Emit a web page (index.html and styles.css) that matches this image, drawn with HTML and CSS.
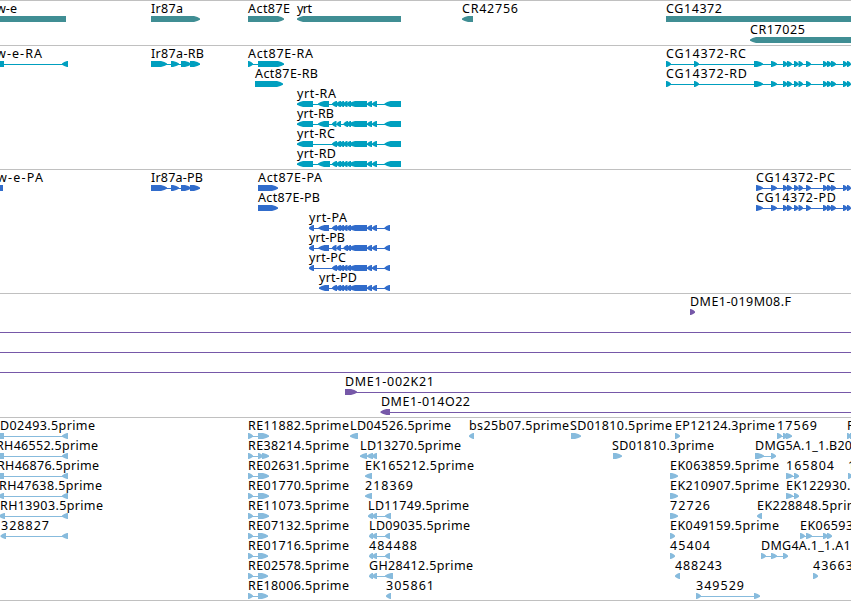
FILE: index.html
```
<!DOCTYPE html>
<html lang="en">
<head>
<meta charset="utf-8">
<title>Genome tracks</title>
<link rel="stylesheet" href="styles.css">
</head>
<body>
<main class="tracks">
<svg class="track track-gene"></svg>
<svg class="track track-transcript"></svg>
<svg class="track track-protein"></svg>
<svg class="track track-bac"></svg>
<svg class="track track-est"></svg>
</main>
<script src="tracks.js"></script>
</body>
</html>
```
FILE: styles.css
```
body {
  margin: 0;
  background: #fff;
}
.tracks {
  display: flex;
  flex-direction: column;
  width: 851px;
  height: 601px;
  box-sizing: border-box;
  border-bottom: 1px solid #c0c0c0;
  overflow: hidden;
}
.track {
  display: block;
  flex: none;
  width: 851px;
  box-sizing: border-box;
  border-top: 1px solid #c0c0c0;
  overflow: hidden;
}
.track-gene { height: 45px; color: #408e94; }
.track-transcript { height: 124px; color: #009fbf; }
.track-protein { height: 124px; color: #316ccb; }
.track-bac { height: 124px; color: #7658a8; }
.track-est { height: 183px; color: #87bbdd; }
.label {
  font: 12.5px "Noto Sans", "DejaVu Sans", sans-serif;
  fill: #000;
}
.span, .exon { fill: currentColor; }
.span { shape-rendering: crispEdges; }
```
FILE: tracks.js
```
// Feature: [row, direction, label, label start, label end, exon ranges]
const yrtMid = [[332,337],[336,341],[339.5,344],[343,347.5],[346.5,351],[349,367],[367,372],[372,377]];
const yrtSkip = [[332,336.5],[336.5,341],[343.5,348],[347,351],[349,367],[367,372],[372,377]];
const cgTail = [[771,777],[783,787.5],[787,792],[794,798.5],[798.5,803],[806,811],[823,827.5],[827,831.5],[831,836],[843,847.5],[847,851]];
const re = [[248,253],[258,269]];

const tracks = {
  gene: { pitch: 21, features: [
    [0,0,'w-e',-4,17,[[-10,66]]],
    [0,1,'Ir87a',151,183,[[151,200]]],
    [0,1,'Act87E',248,290,[[248,284]]],
    [0,-1,'yrt',297,312,[[297,401]]],
    [0,-1,'CR42756',462,518,[[462,473]]],
    [0,0,'CG14372',666,722,[[666,860]]],
    [1,-1,'CR17025',750,805,[[750,860]]]
  ]},
  transcript: { pitch: 20, features: [
    [0,-1,'w-e-RA',-4,42,[[-10,4],[62,68]]],
    [0,1,'Ir87a-RB',151,204,[[151,167],[171,179],[181,191],[190,200]]],
    [0,1,'Act87E-RA',248,313,[[248,253],[258,284]]],
    [1,1,'Act87E-RB',255,318,[[255,283]]],
    [2,-1,'yrt-RA',297,336,[[297,313],[318,329],...yrtMid,[384.5,401]]],
    [3,-1,'yrt-RB',297,334,[[297,313],[318,329],...yrtSkip,[384.5,401]]],
    [4,-1,'yrt-RC',297,335,[[297,313],...yrtMid,[384.5,401]]],
    [5,-1,'yrt-RD',297,336,[[297,313],[318,330],...yrtMid,[384.5,401]]],
    [0,1,'CG14372-RC',666,746,[[666,671],[694,699],[754,763],...cgTail]],
    [1,1,'CG14372-RD',666,747,[[666,671],[694,699],[754,763],...cgTail]]
  ]},
  protein: { pitch: 20, features: [
    [0,0,'w-e-PA',-3,43,[[-10,3]]],
    [0,1,'Ir87a-PB',151,203,[[151,167],[171,179],[181,191],[190,200]]],
    [0,1,'Act87E-PA',258,322,[[258,278]]],
    [1,1,'Act87E-PB',258,320,[[258,278]]],
    [2,-1,'yrt-PA',309,347,[[309,314],[318.5,329],...yrtMid,[384.5,390]]],
    [3,-1,'yrt-PB',309,345,[[309,314],[318.5,329],...yrtSkip,[384.5,390]]],
    [4,-1,'yrt-PC',309,346,[[309,314],...yrtMid,[384.5,390]]],
    [5,-1,'yrt-PD',319,357,[[319,329],...yrtMid,[384.5,390]]],
    [0,1,'CG14372-PC',756,835,[[756,763],...cgTail]],
    [1,1,'CG14372-PD',756,836,[[756,763],...cgTail]]
  ]},
  bac: { pitch: 20, features: [
    [0,1,'DME1-019M08.F',690,791,[[690,695]]],
    [1,1,'',0,0,[[-20,-10],[870,880]]],
    [2,1,'',0,0,[[-20,-10],[870,880]]],
    [3,1,'',0,0,[[-20,-10],[870,880]]],
    [4,1,'DME1-002K21',345,434,[[345,357],[870,880]]],
    [5,-1,'DME1-014O22',381,470,[[380.5,390],[870,880]]]
  ]},
  est: { pitch: 20, features: [
    [0,-1,'D02493.5prime',0,95,[[-10,4],[62,68]]],
    [1,-1,'RH46552.5prime',-4,98,[[-10,4],[62,68]]],
    [2,-1,'RH46876.5prime',-3,99,[[-10,4],[62,68]]],
    [3,-1,'RH47638.5prime',-1,102,[[-2,4],[62,68]]],
    [4,-1,'RH13903.5prime',0,103,[[-1,5],[62,68]]],
    [5,-1,'328827',1,49,[[0.5,6],[62,68]]],
    [0,1,'RE11882.5prime',248,349,re],
    [1,1,'RE38214.5prime',248,349,[[248,253],[258,263],[262,269]]],
    [2,1,'RE02631.5prime',248,349,re],
    [3,1,'RE01770.5prime',248,349,re],
    [4,1,'RE11073.5prime',248,349,re],
    [5,1,'RE07132.5prime',248,349,[[248,253],[258,268]]],
    [6,1,'RE01716.5prime',248,349,[[248,253],[258,268]]],
    [7,1,'RE02578.5prime',248,349,[[248,253],[258,268]]],
    [8,1,'RE18006.5prime',248,349,[[248,253],[258,268]]],
    [0,-1,'LD04526.5prime',350,451,[[350,358]]],
    [1,-1,'LD13270.5prime',360,461,[[360,367],[367,373],[372,377]]],
    [2,-1,'EK165212.5prime',365,474,[[365,372]]],
    [3,-1,'218369',365,413,[[365,372]]],
    [4,-1,'LD11749.5prime',368,469,[[368,373],[372,377],[385,391]]],
    [5,-1,'LD09035.5prime',369,470,[[369,373],[372,377],[385,390]]],
    [6,-1,'484488',369,417,[[369,373],[372,377],[385,390]]],
    [7,-1,'GH28412.5prime',369,473,[[369,373],[372,377],[385,393]]],
    [8,-1,'305861',386,434,[[386,391]]],
    [0,-1,'bs25b07.5prime',469,569,[[469,474]]],
    [0,1,'SD01810.5prime',570,672,[[571,581]]],
    [1,1,'SD01810.3prime',612,714,[[613,622]]],
    [0,1,'EP12124.3prime',675,775,[[675,680]]],
    [2,1,'EK063859.5prime',670,779,[[670,678]]],
    [3,1,'EK210907.5prime',670,779,[[670,678]]],
    [4,1,'72726',670,710,[[670,678]]],
    [5,1,'EK049159.5prime',670,779,[[670,675]]],
    [6,1,'45404',670,710,[[670,675]]],
    [7,-1,'488243',675,722,[[675,680]]],
    [8,1,'349529',696,744,[[696,701],[754,760]]],
    [0,1,'17569',777,817,[[777,782],[783,788],[786,792]]],
    [1,1,'DMG5A.1_1.B20',755,852,[[755,764],[771,776]]],
    [2,1,'165804',786,834,[[786,793],[794,799]]],
    [3,1,'EK122930.5prime',786,895,[[786,793],[794,799]]],
    [4,-1,'EK228848.5prime',757,866,[[757,762]]],
    [5,1,'EK065930.5prime',800,909,[[800,805],[806,812],[823,828],[827,832]]],
    [6,1,'DMG4A.1_1.A11',761,858,[[761,766],[771,777],[783,788]]],
    [7,1,'436630',813,861,[[813,818]]],
    [0,1,'RH',847,864,[[847,851],[850,856]]],
    [2,1,'17',848,863,[[848,852],[851,856]]]
  ]}
};

const NS = 'http://www.w3.org/2000/svg';
function add(svg, tag, attrs, text) {
  const node = document.createElementNS(NS, tag);
  for (const key in attrs) node.setAttribute(key, attrs[key]);
  if (text) node.textContent = text;
  svg.appendChild(node);
}

function exonPoints(a, b, dir, y) {
  if (!dir) return `${a},${y} ${b},${y} ${b},${y + 6} ${a},${y + 6}`;
  const len = b - a;
  const head = len > 7 ? 6 : len - 1;
  const tip = dir > 0 ? b : a;
  const tail = dir > 0 ? a : b;
  const neck = tip - dir * head;
  const mid = tip - dir * head * 0.45;
  return `${tail},${y} ${neck},${y} ${mid},${y + 1} ${tip},${y + 2.4} ${tip},${y + 3.8} ${mid},${y + 5} ${neck},${y + 6} ${tail},${y + 6}`;
}

for (const [name, track] of Object.entries(tracks)) {
  const svg = document.querySelector('.track-' + name);
  for (const [row, dir, label, start, end, exons] of track.features) {
    const y = row * track.pitch;
    const first = exons[0][0];
    const last = exons[exons.length - 1][1];
    if (exons.length > 1) {
      add(svg, 'rect', { class: 'span', x: first, y: y + 18, width: last - first, height: 1 });
    }
    for (const [a, b] of exons) {
      add(svg, 'polygon', { class: 'exon', points: exonPoints(a, b, dir, y + 15) });
    }
    if (label) {
      add(svg, 'text', { class: 'label', x: start, y: y + 12, textLength: end - start }, label);
    }
  }
}
```
